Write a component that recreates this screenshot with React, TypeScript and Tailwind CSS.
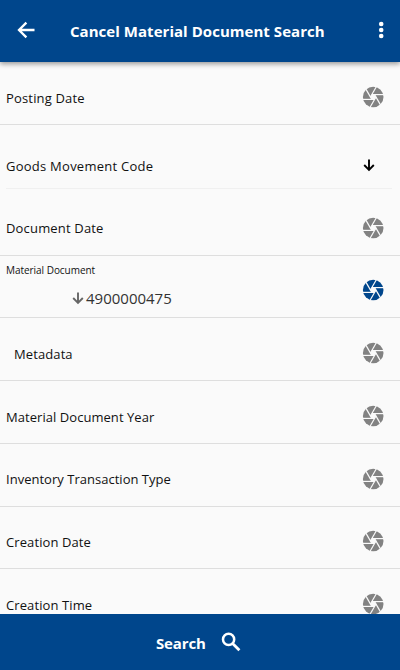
import React from "react";

type RowProps = { label: string; height: string; text: string; icon: string; indent?: string };

function Aperture({ className }: { className: string }) {
  return (
    <svg viewBox="0 0 24 24" className={className}>
      <circle cx="12.2" cy="12" r="10.3" fill="currentColor" />
      <g transform="translate(12.2 12)" stroke="#fafafa" strokeWidth="1.2" fill="#fafafa">
        <path d="M-1.3-2.25h2.6L2.6 0 1.3 2.25h-2.6L-2.6 0z" strokeWidth="0.5" />
        {[0, 60, 120, 180, 240, 300].map((angle) => (
          <path key={angle} d="M-1.4-2.4H11" transform={`rotate(${angle})`} />
        ))}
      </g>
    </svg>
  );
}

function DownArrow({ className }: { className: string }) {
  return (
    <svg viewBox="0 0 16 16" fill="none" stroke="currentColor" strokeWidth="1.9" className={className}>
      <path d="M8 2.6v10M3.2 8l4.8 4.8L12.8 8" />
    </svg>
  );
}

function BackArrow({ className }: { className: string }) {
  return (
    <svg viewBox="0 0 24 24" fill="none" stroke="currentColor" strokeWidth="2.3" className={className}>
      <path d="M20.5 12H5.5M12.4 4.6 5 12l7.4 7.4" />
    </svg>
  );
}

function MoreDots({ className }: { className: string }) {
  return (
    <svg viewBox="0 0 24 24" fill="currentColor" className={className}>
      <circle cx="12.2" cy="6" r="2.3" />
      <circle cx="12.2" cy="12" r="2.3" />
      <circle cx="12.2" cy="18" r="2.3" />
    </svg>
  );
}

function SearchIcon({ className }: { className: string }) {
  return (
    <svg viewBox="0 0 24 24" fill="none" stroke="currentColor" strokeWidth="2.5" className={className}>
      <circle cx="9.6" cy="9.4" r="5.6" />
      <path d="m13.6 13.4 6.8 6.8" strokeWidth="2.8" />
    </svg>
  );
}

function Row({ label, height, text, icon, indent = "pl-[6px]" }: RowProps) {
  return (
    <div className={`flex shrink-0 items-start justify-between border-b border-[#dedede] pr-[15px] ${indent} ${height}`}>
      <span className={`whitespace-nowrap text-[13px] leading-5 text-[#111] ${text}`}>{label}</span>
      <Aperture className={`size-6 text-[#828282] ${icon}`} />
    </div>
  );
}

export default function App() {
  return (
    <div className="flex h-[670px] w-[400px] flex-col overflow-hidden bg-[#fafafa] font-['Open_Sans','Noto_Sans',sans-serif]">
      <header className="z-10 flex h-[62px] shrink-0 items-start bg-[#00468c] text-white shadow-[0_2px_5px_rgba(0,0,0,0.4)]">
        <BackArrow className="mt-[18px] ml-[14px] size-6" />
        <h1 className="mt-[21px] ml-8 w-[256px] whitespace-nowrap text-[15px] leading-5 font-bold tracking-[0.04px]">Cancel Material Document Search</h1>
        <MoreDots className="mt-[18px] ml-[43px] size-6" />
      </header>
      <main className="flex min-h-0 flex-1 flex-col overflow-hidden">
        <Row label="Posting Date" height="h-[63px]" text="mt-[26px] tracking-[0.17px]" icon="mt-[23px]" />
        <div className="mr-2 ml-[6px] flex h-16 shrink-0 items-start justify-between border-b border-[#f0f0f0] pr-[15px]">
          <span className="mt-[31px] whitespace-nowrap text-[13px] leading-5 tracking-[0.25px] text-[#111]">Goods Movement Code</span>
          <DownArrow className="mt-[32px] size-4 text-black" />
        </div>
        <Row label="Document Date" height="h-[67px]" text="mt-[29px] tracking-[0.17px]" icon="mt-[27px]" />
        <div className="flex h-[62px] shrink-0 items-start justify-between border-b border-[#dedede] pr-[15px] pl-[6px]">
          <div className="flex flex-col">
            <span className="mt-[6px] whitespace-nowrap text-[10px] leading-4 tracking-[-0.04px] text-[#111]">Material Document</span>
            <div className="mt-[10px] ml-16 flex items-center">
              <DownArrow className="size-4 text-[#666]" />
              <span className="text-[15px] leading-5 text-[#333]">4900000475</span>
            </div>
          </div>
          <Aperture className="mt-[22px] size-6 text-[#00468c]" />
        </div>
        <Row label="Metadata" height="h-[63px]" text="mt-[26px] tracking-[0.1px]" icon="mt-[23px]" indent="pl-[14px]" />
        <Row label="Material Document Year" height="h-[63px]" text="mt-[26px] tracking-[0.05px]" icon="mt-[23px]" />
        <Row label="Inventory Transaction Type" height="h-[63px]" text="mt-[25px] tracking-[0.02px]" icon="mt-[23px]" />
        <Row label="Creation Date" height="h-[62px]" text="mt-[25px] tracking-[0.1px]" icon="mt-[22px]" />
        <Row label="Creation Time" height="h-[63px]" text="mt-[26px] tracking-[0.1px]" icon="mt-[23px]" />
      </main>
      <footer className="flex h-14 shrink-0 items-start bg-[#00468c] text-white">
        <span className="mt-[19px] ml-[156px] w-[51px] text-[15px] leading-5 font-bold tracking-[-0.15px]">Search</span>
        <SearchIcon className="mt-4 ml-3 size-6" />
      </footer>
    </div>
  );
}
